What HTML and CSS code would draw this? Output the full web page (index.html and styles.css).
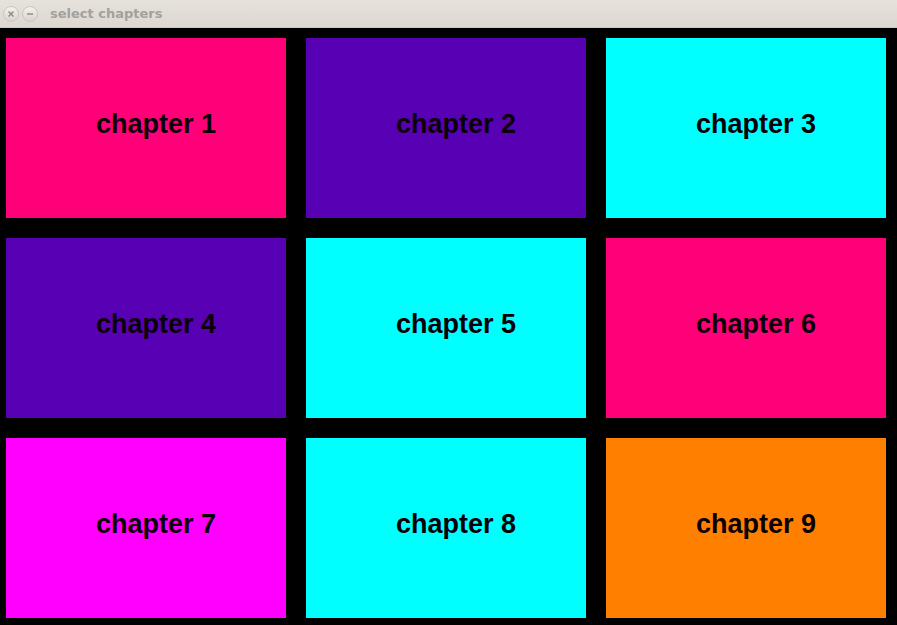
FILE: index.html
```html
<!DOCTYPE html>
<html>
<head>
<meta charset="utf-8">
<link rel="stylesheet" href="styles.css">
</head>
<body>
<div class="titlebar">
  <span class="btn">
    <svg width="14" height="14" viewBox="0 0 14 14"><path d="M4.5 4.5 L9.5 9.5 M9.5 4.5 L4.5 9.5" stroke="#8a8882" stroke-width="1.4"/></svg>
  </span>
  <span class="btn">
    <svg width="14" height="14" viewBox="0 0 14 14"><path d="M4 7 H10" stroke="#8a8882" stroke-width="1.4"/></svg>
  </span>
  <span class="title">select chapters</span>
</div>
<div class="grid">
  <div class="tile pink">chapter 1</div>
  <div class="tile purple">chapter 2</div>
  <div class="tile cyan">chapter 3</div>
  <div class="tile purple">chapter 4</div>
  <div class="tile cyan">chapter 5</div>
  <div class="tile pink">chapter 6</div>
  <div class="tile magenta">chapter 7</div>
  <div class="tile cyan">chapter 8</div>
  <div class="tile orange">chapter 9</div>
</div>
</body>
</html>
```
FILE: styles.css
```css
html, body {
  margin: 0;
  padding: 0;
  background: #000;
  height: 100%;
  overflow: hidden;
}
.titlebar {
  height: 28px;
  box-sizing: border-box;
  background: linear-gradient(#e6e2dc, #dcd8d0);
  border-bottom: 1px solid #cfcac2;
  display: flex;
  align-items: center;
  padding-left: 3px;
  gap: 3px;
}
.btn {
  width: 14px;
  height: 14px;
  border-radius: 50%;
  background: linear-gradient(#f4f2ee, #d8d4cc);
  border: 1px solid #cbc6be;
  display: flex;
  align-items: center;
  justify-content: center;
}
.btn svg { display: block; }
.title {
  margin-left: 9px;
  font-family: "DejaVu Sans", sans-serif;
  font-weight: bold;
  font-size: 13px;
  color: #a3a19b;
}
.grid {
  display: grid;
  grid-template-columns: repeat(3, 280px);
  grid-auto-rows: 180px;
  gap: 20px;
  padding: 10px 0 0 6px;
}
.tile {
  display: flex;
  align-items: center;
  justify-content: center;
  padding-left: 20px;
  padding-bottom: 8px;
  box-sizing: border-box;
  font-family: "Liberation Sans", Arial, sans-serif;
  font-weight: bold;
  font-size: 27px;
  color: #0a0008;
}
.pink { background: #ff0078; }
.purple { background: #5800b4; }
.cyan { background: #00ffff; }
.magenta { background: #ff00ff; }
.orange { background: #ff8000; }
```
